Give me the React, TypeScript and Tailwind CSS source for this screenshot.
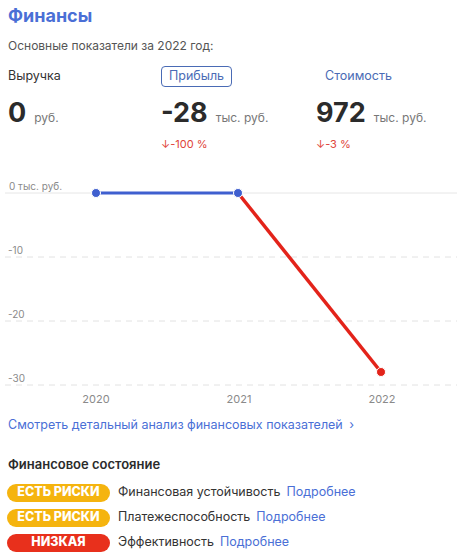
export default function App() {
  const font = { fontFamily: "Inter, 'Noto Sans', sans-serif" };
  const statuses = [
    { badge: "ЕСТЬ РИСКИ", color: "bg-[#f5b40f]", label: "Финансовая устойчивость" },
    { badge: "ЕСТЬ РИСКИ", color: "bg-[#f5b40f]", label: "Платежеспособность" },
    { badge: "НИЗКАЯ", color: "bg-[#e8301c]", label: "Эффективность" },
  ];

  return (
    <main className="h-[558px] w-[457px] overflow-hidden bg-white text-[#333]" style={font}>
      <div className="px-2 pt-[4px]">
        <h1 className="text-[18px] font-bold leading-6 text-[#4a6fd6]">Финансы</h1>
        <p className="mt-[8px] text-[12px] leading-5 text-[#555]">Основные показатели за 2022 год:</p>

        <div className="mt-[10px] grid grid-cols-[153px_155px_1fr]">
          <div>
            <div className="flex h-[21px] items-center text-[12.5px] text-[#333]">Выручка</div>
            <div className="mt-[10px] flex items-baseline gap-[8px]">
              <span className="text-[27px] font-bold leading-8 text-[#2b2b2b]">0</span>
              <span className="text-[12px] text-[#777]">руб.</span>
            </div>
          </div>
          <div>
            <div className="flex h-[21px] w-[71px] items-center justify-center rounded-[4px] border border-[#4a6bb5] text-[12.5px] text-[#4a6bb5]">
              Прибыль
            </div>
            <div className="mt-[10px] flex items-baseline gap-[8px]">
              <span className="text-[27px] font-bold leading-8 text-[#2b2b2b]">-28</span>
              <span className="text-[12px] text-[#777]">тыс. руб.</span>
            </div>
            <div className="mt-[7px] text-[11px] text-[#e0443a]">↓-100 %</div>
          </div>
          <div>
            <div className="flex h-[21px] items-center pl-[9px] text-[12.5px] text-[#4a6bb5]">Стоимость</div>
            <div className="mt-[10px] flex items-baseline gap-[8px]">
              <span className="text-[27px] font-bold leading-8 text-[#2b2b2b]">972</span>
              <span className="text-[12px] text-[#777]">тыс. руб.</span>
            </div>
            <div className="mt-[7px] text-[11px] text-[#e0443a]">↓-3 %</div>
          </div>
        </div>
      </div>

      <svg className="mt-[18px] block" width="457" height="240" viewBox="0 0 457 240">
        <line x1="5" y1="22" x2="457" y2="22" stroke="#e6e6e6" strokeWidth="1" />
        <line x1="5" y1="86" x2="457" y2="86" stroke="#e2e2e2" strokeWidth="1" strokeDasharray="6 5" />
        <line x1="5" y1="150" x2="457" y2="150" stroke="#e2e2e2" strokeWidth="1" strokeDasharray="6 5" />
        <line x1="5" y1="214" x2="457" y2="214" stroke="#e2e2e2" strokeWidth="1" strokeDasharray="6 5" />
        <g fill="#8a8a8a" fontSize="10" style={font}>
          <text x="9" y="19">0 тыс. руб.</text>
          <text x="8" y="83">-10</text>
          <text x="8" y="147">-20</text>
          <text x="8" y="211">-30</text>
        </g>
        <g fill="#8a8a8a" fontSize="11" textAnchor="middle" style={font}>
          <text x="96" y="232">2020</text>
          <text x="239" y="232">2021</text>
          <text x="382" y="232">2022</text>
        </g>
        <line x1="96" y1="22" x2="238" y2="22" stroke="#3f5fcf" strokeWidth="3" />
        <line x1="238" y1="22" x2="381" y2="201" stroke="#e3231a" strokeWidth="3.5" />
        <circle cx="96" cy="22" r="4.5" fill="#3f5fcf" stroke="#fff" strokeWidth="1" />
        <circle cx="238" cy="22" r="4.5" fill="#3f5fcf" stroke="#fff" strokeWidth="1" />
        <circle cx="381" cy="201" r="4.5" fill="#e3231a" stroke="#fff" strokeWidth="1" />
      </svg>

      <div className="px-2">
        <a className="mt-[4px] block text-[12.5px] leading-5 text-[#4a6fd6]">
          Смотреть детальный анализ финансовых показателей <span className="ml-[3px]">›</span>
        </a>
        <h2 className="mt-[19px] text-[13px] font-semibold leading-5 text-[#2b2b2b]">Финансовое состояние</h2>
        <div className="mt-[10px] flex flex-col gap-[7px]">
          {statuses.map((s) => (
            <div key={s.label} className="flex h-[18px] items-center">
              <span
                className={`${s.color} flex h-[18px] w-[103px] -ml-[1px] items-center justify-center rounded-full text-[12.5px] font-extrabold text-white`}
              >
                {s.badge}
              </span>
              <span className="ml-[8px] text-[12.5px] text-[#333]">{s.label}</span>
              <span className="ml-[6px] text-[12.5px] text-[#4a6fd6]">Подробнее</span>
            </div>
          ))}
        </div>
      </div>
    </main>
  );
}
